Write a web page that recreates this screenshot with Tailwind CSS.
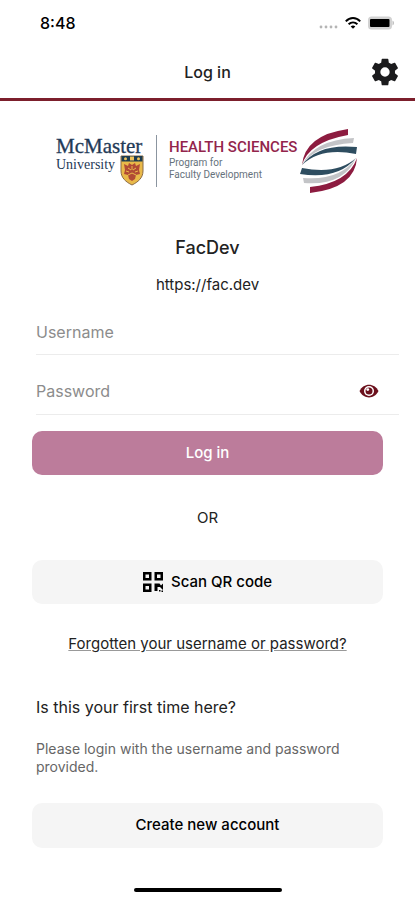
<!DOCTYPE html>
<html lang="en">
<head>
  <meta charset="UTF-8">
  <meta name="viewport" content="width=device-width, initial-scale=1.0">
  <title>Log in</title>
  <script src="https://cdn.jsdelivr.net/npm/@tailwindcss/browser@4"></script>
</head>
<body class="bg-white font-['Inter','Liberation_Sans',sans-serif] text-base text-[#222]">
<div class="min-h-screen flex flex-col">

  <!-- Status bar -->
  <div class="h-[46px] pl-10 pr-5 flex items-center justify-between">
    <span class="text-base leading-6 font-medium text-black">8:48</span>
    <div class="flex items-center gap-[6px]">
      <svg class="w-5 h-4" viewBox="0 0 20 16" fill="#b5b5b5">
        <circle cx="2" cy="12" r="1.4"/><circle cx="7" cy="12" r="1.4"/><circle cx="12" cy="12" r="1.4"/><circle cx="17" cy="12" r="1.4"/>
      </svg>
      <svg class="w-4 h-4" viewBox="0 0 16 16" fill="none" stroke="#000" stroke-width="2">
        <path d="M.8 6.4C5 2 11 2 15.2 6.4"/>
        <path d="M3.6 9.3c2.6-2.5 6.2-2.5 8.8 0"/>
        <path d="M8 13.8 5.7 11.5c1.3-1.200 3.3-1.200 4.600 0z" fill="#000" stroke="none"/>
      </svg>
      <svg class="w-7 h-4" viewBox="0 0 28 16">
        <rect x="1" y="1.500" width="24" height="13" rx="3.500" fill="#d2d2d2"/>
        <rect x="3" y="4" width="19.500" height="8" rx="1" fill="#000"/>
        <path d="M25.500 5.500c2 1 2 4 0 5z" fill="#bbb"/>
      </svg>
    </div>
  </div>

  <!-- Header -->
  <header class="h-[55px] px-[14px] grid grid-cols-[32px_1fr_32px] items-center border-b-3 border-[#7c1f2c]">
    <h1 class="col-start-2 text-center text-base font-medium">Log in</h1>
    <button type="button" aria-label="Settings" class="flex justify-end">
      <svg class="w-8 h-8" viewBox="0 0 24 24" fill="#1b1b1d">
        <path d="M19.430 12.980c.040-.320.070-.640.070-.980s-.030-.660-.070-.980l2.110-1.650a.5.5 0 0 0 .120-.640l-2-3.460a.5.5 0 0 0-.610-.220l-2.490 1a7.300 7.300 0 0 0-1.690-.980l-.380-2.650A.49.49 0 0 0 14 2h-4a.49.49 0 0 0-.490.420l-.380 2.650c-.610.250-1.170.590-1.690.980l-2.490-1a.49.49 0 0 0-.610.220l-2 3.460a.49.49 0 0 0 .120.640l2.110 1.650c-.040.320-.070.650-.070.980s.030.660.070.980l-2.110 1.650a.5.5 0 0 0-.120.640l2 3.460c.120.220.390.300.610.220l2.490-1c.520.400 1.080.730 1.690.980l.380 2.650c.030.240.240.420.490.420h4c.250 0 .460-.180.490-.420l.380-2.650a7.300 7.300 0 0 0 1.690-.980l2.490 1c.230.090.490 0 .610-.220l2-3.460a.5.5 0 0 0-.120-.640zM12 15.500a3.500 3.500 0 1 1 0-7 3.500 3.500 0 0 1 0 7z"/>
      </svg>
    </button>
  </header>

  <main class="flex-1 px-8 pt-[26px] flex flex-col">
    <!-- Logo -->
    <div class="flex justify-center items-start whitespace-nowrap">
      <div class="relative mt-2 w-[88px] font-['Liberation_Serif',serif] text-[#1f3a57]">
        <div class="text-[21px] leading-[22px] [-webkit-text-stroke:0.3px]">McMaster</div>
        <div class="text-sm leading-4">University</div>
        <svg class="absolute right-0 top-[19px] w-6 h-8" viewBox="0 0 24 32">
          <path d="M1 2h22v15c0 7-5 11-11 14C6 28 1 24 1 17z" fill="#e9b949" stroke="#8b6a45"/>
          <path d="M1.500 2h21v5.500h-21z" fill="#1d3c50"/>
          <path d="M10 2.500h4v4h-4z" fill="#efc25a"/>
          <circle cx="5.500" cy="4.800" r="1.500" fill="#efc25a"/><circle cx="18.500" cy="4.800" r="1.500" fill="#efc25a"/>
          <path d="M4 10l4 2 1-3 3 2 3-2 1 3 4-2-1 6 1 4-4 1-1 4-3 2-3-2-1-4-4-1 1-4z" fill="#b14a35"/>
          <path d="M8 14l3 2M16 14l-3 2M8 21l4-2 4 2M12 12v4M6 17l3 1M18 17l-3 1" stroke="#e9b949" fill="none"/>
        </svg>
      </div>
      <div class="ml-3 mt-2 w-px h-[52px] bg-[#8b95a0]"></div>
      <div class="ml-3 mt-[10px] w-[130px] font-['Roboto','Liberation_Sans',sans-serif]">
        <div class="text-[15px] leading-5 font-medium text-[#93254c]">HEALTH SCIENCES</div>
        <div class="text-[10px] leading-3 text-[#66727c]">Program for<br>Faculty Development</div>
      </div>
      <svg class="w-[60px] h-[68px]" viewBox="0 0 60 68">
        <path d="M3 38Q6 8 49 2V8Q10 15 3 38z" fill="#8d1c40"/>
        <path d="M3 38Q15 13 55 11L54 16Q16 18 3 38z" fill="#c3c4c7"/>
        <path d="M3 38Q19 16 58 20L57 27Q22 20 3 38z" fill="#2e4d60"/>
        <path d="M3 41Q38 48 57 31Q39 53 1 47z" fill="#2e4d60"/>
        <path d="M4 51Q41 54 57 31Q45 59 5 56z" fill="#c3c4c7"/>
        <path d="M11 60Q49 56 58 31Q56 61 11 66z" fill="#8d1c40"/>
      </svg>
    </div>

    <h2 class="mt-[41px] text-center text-lg leading-6 font-medium">FacDev</h2>
    <p class="mt-[13px] text-center text-[15px] leading-6">https://fac.dev</p>

    <form class="flex flex-col" onsubmit="return false">
      <div class="ml-1 -mr-4 mt-[11px] h-[47px] border-b border-[#ececec]">
        <input type="text" aria-label="Username" placeholder="Username" class="w-full h-12 outline-none placeholder:text-[#8c8c8c]">
      </div>
      <div class="ml-1 -mr-4 mt-3 h-12 pr-5 flex items-center border-b border-[#ececec]">
        <input type="password" aria-label="Password" placeholder="Password" class="min-w-0 flex-1 h-12 outline-none placeholder:text-[#8c8c8c]">
        <button type="button" aria-label="Show password">
          <svg class="w-5 h-5" viewBox="0 0 20 20">
            <path d="M.5 10C4.500 1.500 15.500 1.500 19.500 10 15.500 18.500 4.500 18.500.5 10z" fill="#6b101c"/>
            <circle cx="10" cy="10" r="5" fill="#fff"/>
            <circle cx="10" cy="10" r="3.500" fill="#6b101c"/>
            <circle cx="8.800" cy="8.600" r="1.400" fill="#fff"/>
          </svg>
        </button>
      </div>
      <button type="submit" class="mt-4 h-11 rounded-[10px] bg-[#bc7c9b] text-white text-[15px] font-medium">Log in</button>
    </form>

    <p class="mt-[31px] text-center text-[15px] leading-6">OR</p>

    <button type="button" class="mt-[30px] h-11 rounded-[10px] bg-[#f5f5f5] flex items-center justify-center gap-2 text-[15px] font-medium text-black">
      <svg class="w-5 h-5" viewBox="0 0 20 20">
        <g fill="none" stroke="#000" stroke-width="2.500">
          <path d="M1.250 1.250h6v6h-6zM12.750 1.250h6v6h-6zM1.250 12.750h6v6h-6z"/>
        </g>
        <path d="M11.500 11.500h5l1.500 2 2-2V18l-3-3h-2.500v4h-3zM16 18h1.500v1.500H16zM18.500 18.500H20V20h-1.500z" fill="#000"/>
      </svg>
      Scan QR code
    </button>

    <a href="#" class="mt-7 self-center text-[15px] leading-6 underline decoration-[#999]">Forgotten your username or password?</a>

    <h2 class="ml-1 mt-[39px] leading-6">Is this your first time here?</h2>
    <p class="ml-1 mt-[21px] w-[310px] text-sm leading-[18px] text-[#666]">Please login with the username and password provided.</p>

    <button type="button" class="mt-[27px] h-[45px] rounded-[10px] bg-[#f5f5f5] text-[15px] font-medium text-black">Create new account</button>
  </main>

  <!-- Home indicator -->
  <div class="mt-8 mb-2 mx-auto w-[148px] h-1 rounded-full bg-black"></div>
</div>
</body>
</html>
